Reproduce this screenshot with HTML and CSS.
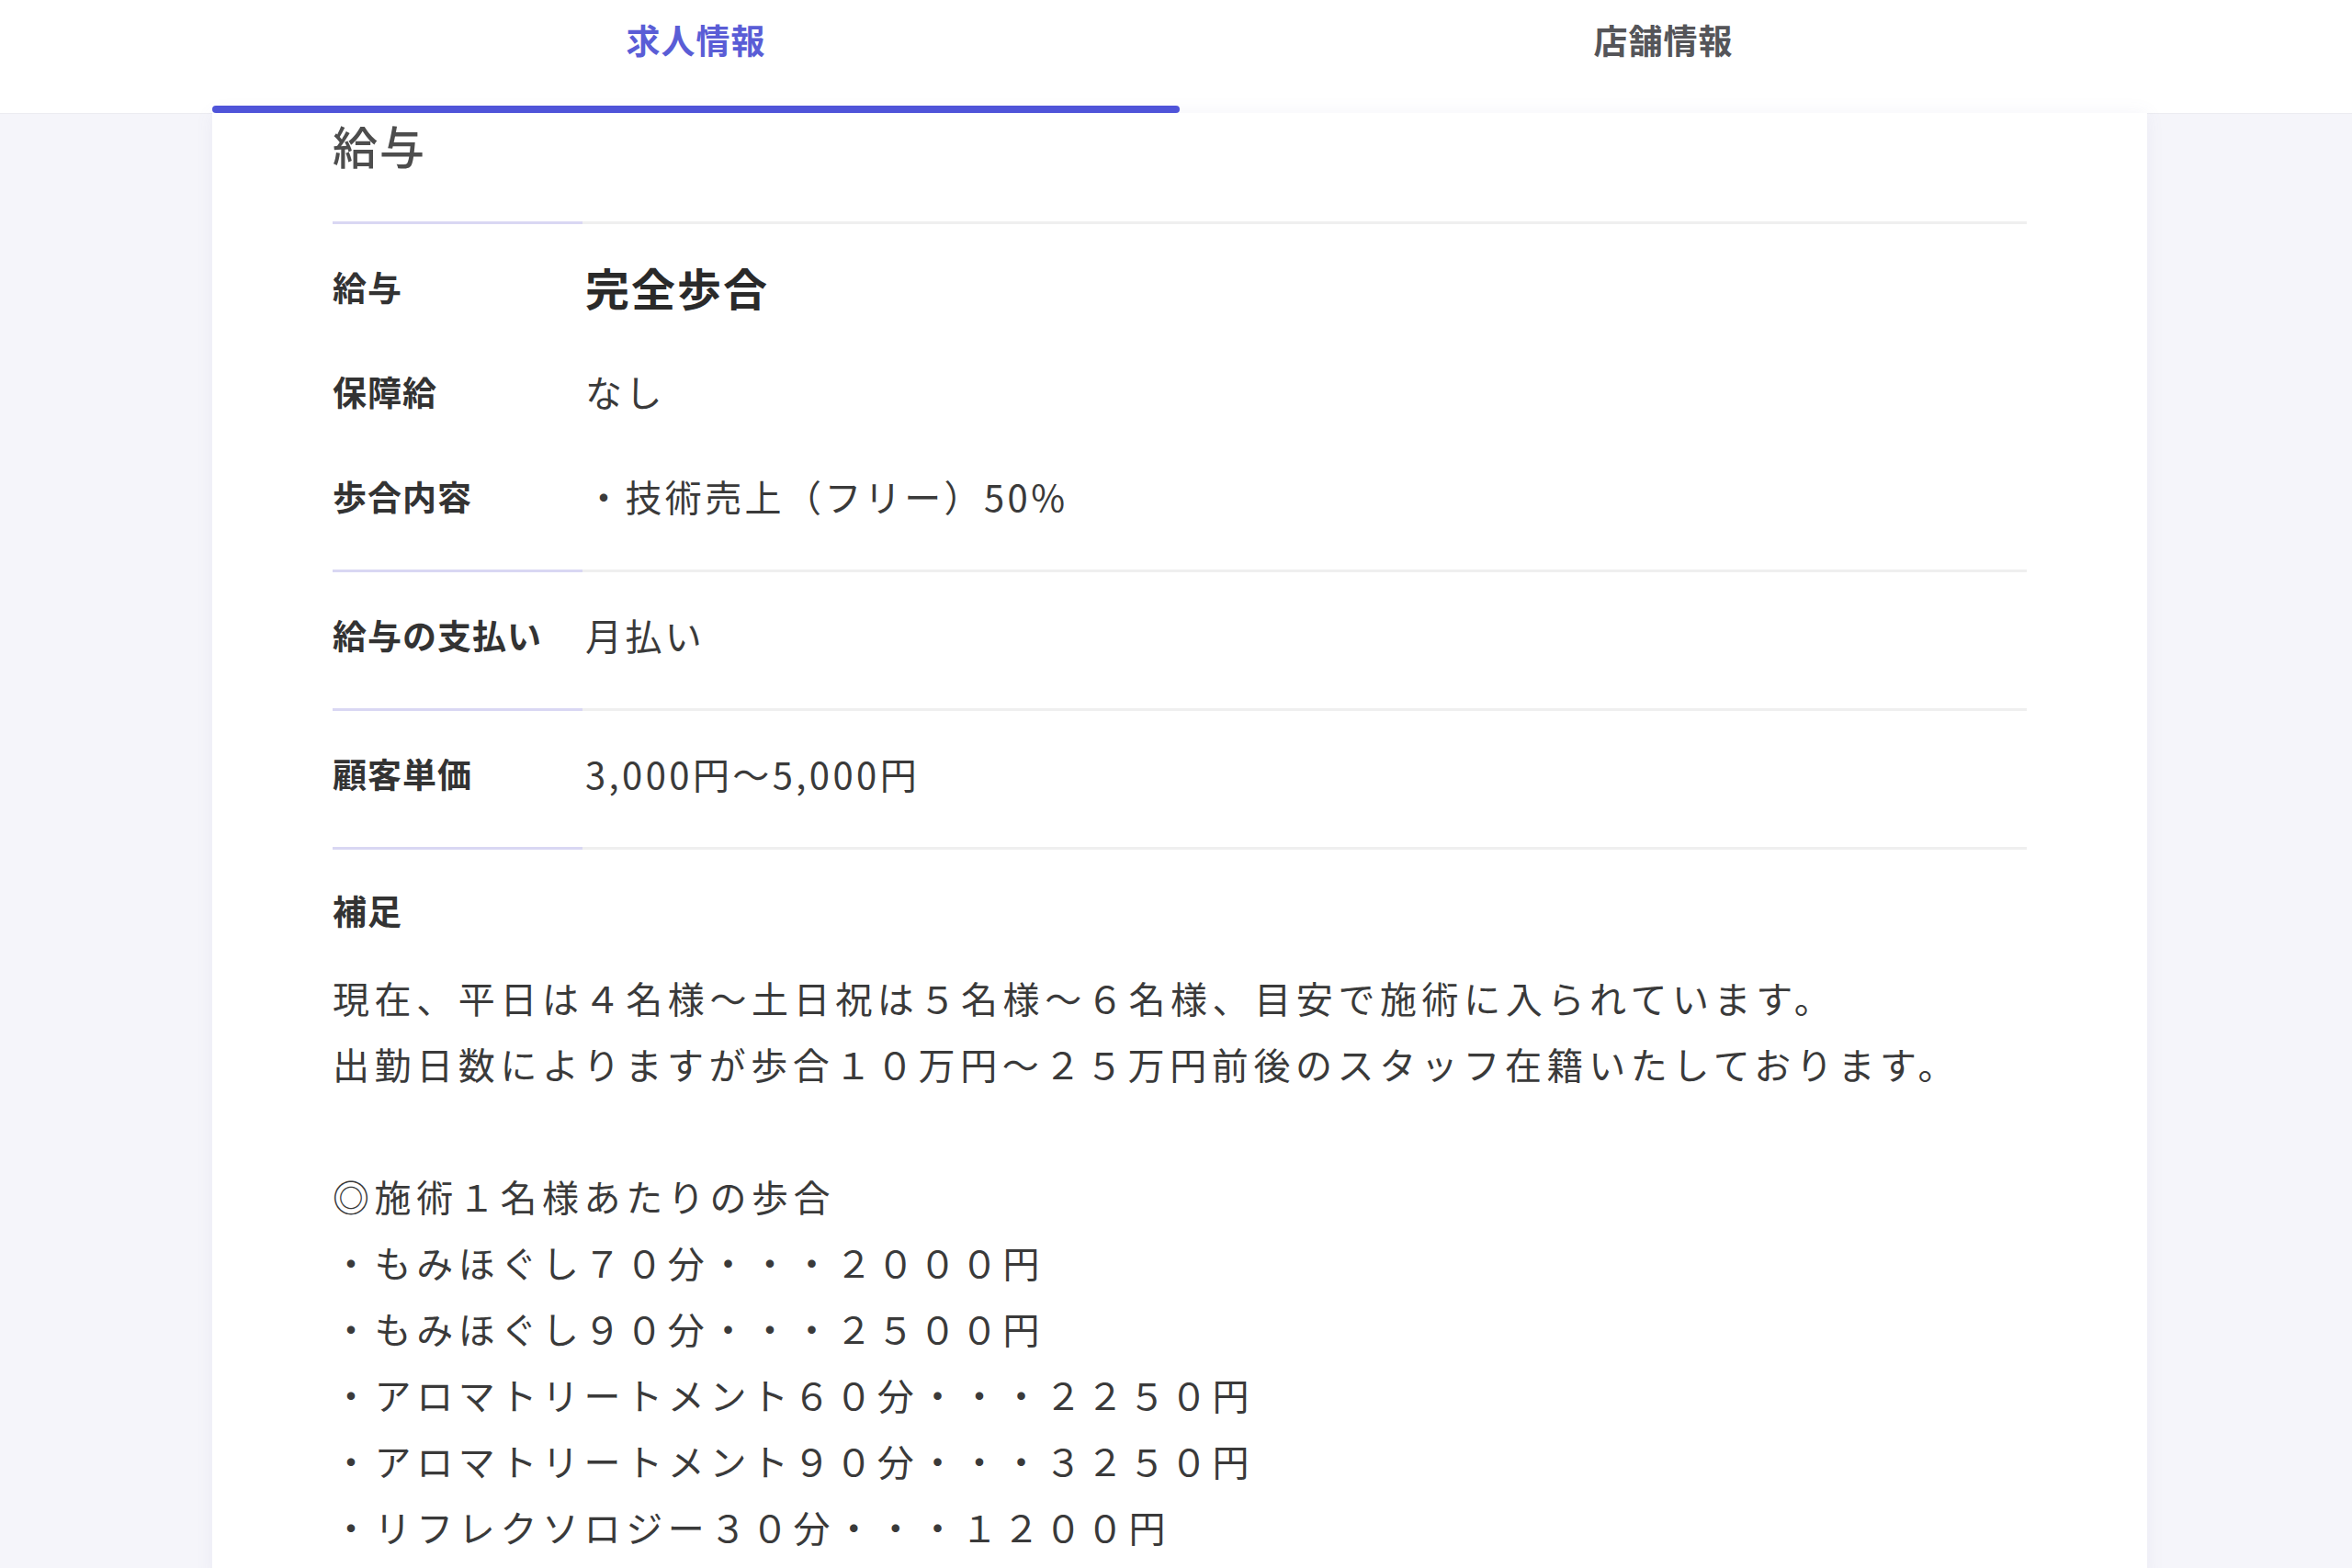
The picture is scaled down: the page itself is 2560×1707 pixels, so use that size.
FILE: index.html
```html
<!DOCTYPE html>
<html lang="ja">
<head>
<meta charset="utf-8">
<title>求人情報</title>
<link rel="stylesheet" href="styles.css">
</head>
<body>
<nav class="tabbar">
  <div class="tabs">
    <div class="tab tab-active"><span class="tab-label">求人情報</span><span class="tab-indicator"></span></div>
    <div class="tab"><span class="tab-label">店舗情報</span><span class="tab-indicator"></span></div>
  </div>
</nav>
<main class="card">
  <h2 class="section-title">給与</h2>
  <div class="divider"></div>
  <div class="group">
    <div class="row"><div class="label">給与</div><div class="value value-strong">完全歩合</div></div>
    <div class="row"><div class="label">保障給</div><div class="value">なし</div></div>
    <div class="row"><div class="label">歩合内容</div><div class="value">・技術売上（フリー）50%</div></div>
  </div>
  <div class="divider"></div>
  <div class="group">
    <div class="row"><div class="label">給与の支払い</div><div class="value">月払い</div></div>
  </div>
  <div class="divider"></div>
  <div class="group">
    <div class="row"><div class="label">顧客単価</div><div class="value">3,000円〜5,000円</div></div>
  </div>
  <div class="divider"></div>
  <div class="notes">
    <div class="label">補足</div>
    <div class="notes-body">
      <p class="line">現在、平日は４名様〜土日祝は５名様〜６名様、目安で施術に入られています。</p>
      <p class="line">出勤日数によりますが歩合１０万円〜２５万円前後のスタッフ在籍いたしております。</p>
      <p class="line line-blank">&nbsp;</p>
      <p class="line">◎施術１名様あたりの歩合</p>
      <p class="line">・もみほぐし７０分・・・２０００円</p>
      <p class="line">・もみほぐし９０分・・・２５００円</p>
      <p class="line">・アロマトリートメント６０分・・・２２５０円</p>
      <p class="line">・アロマトリートメント９０分・・・３２５０円</p>
      <p class="line">・リフレクソロジー３０分・・・１２００円</p>
    </div>
  </div>
</main>
</body>
</html>
```

FILE: styles.css
```css
html, body {
  margin: 0;
  padding: 0;
}
body {
  background: #f5f5fa;
  font-family: "Noto Sans CJK JP", "Noto Sans", sans-serif;
  color: #3a3a3a;
  overflow: hidden;
  height: 1707px;
}
.tabbar {
  background: #ffffff;
  height: 123px;
  box-shadow: 0 1px 0 #ececf1;
}
.tabs {
  display: flex;
  width: 2106px;
  margin-left: 231px;
  height: 123px;
}
.tab {
  flex: 1;
  display: flex;
  flex-direction: column;
}
.tab-label {
  flex: 1;
  display: flex;
  align-items: center;
  justify-content: center;
  padding-bottom: 30px;
  font-size: 37px;
  font-weight: 700;
  letter-spacing: 1px;
  color: #555559;
}
.tab-indicator {
  height: 8px;
  border-radius: 4px;
}
.tab-active .tab-label {
  color: #5a5dd6;
}
.tab-active .tab-indicator {
  background: #4f54d9;
}
.card {
  background: #ffffff;
  width: 2106px;
  margin-left: 231px;
  min-height: 1600px;
  box-sizing: border-box;
  padding: 0 131px 0 131px;
  box-shadow: 0 0 18px rgba(110, 110, 180, 0.08);
}
.section-title {
  margin: 0 0 44px 0;
  padding-bottom: 5px;
  height: 74px;
  box-sizing: border-box;
  font-size: 49px;
  line-height: 69px;
  font-weight: 500;
  color: #4d4d4d;
  letter-spacing: 2px;
}
.divider {
  height: 3px;
  background: linear-gradient(to right, #d9d7f3 0, #d9d7f3 272px, #efefef 272px, #efefef 100%);
}
.group {
  display: flex;
  flex-direction: column;
  gap: 42px;
  padding: 36px 0 40px 0;
}
.row {
  display: flex;
  align-items: center;
  height: 72px;
  box-sizing: border-box;
  padding-bottom: 7px;
}
.label {
  width: 275px;
  flex-shrink: 0;
  font-size: 37px;
  line-height: 65px;
  font-weight: 700;
  color: #333333;
  letter-spacing: 1px;
}
.value {
  font-size: 40px;
  line-height: 65px;
  color: #3a3a3a;
  letter-spacing: 3.4px;
}
.value-strong {
  font-size: 48px;
  font-weight: 700;
  color: #2a2a2a;
  letter-spacing: 2px;
}
.notes {
  padding-top: 30px;
}
.notes .label {
  line-height: 72px;
}
.notes-body {
  margin-top: 23px;
}
.line {
  margin: 0;
  font-size: 40px;
  line-height: 72px;
  letter-spacing: 5.6px;
  color: #3a3a3a;
  white-space: nowrap;
}
```
